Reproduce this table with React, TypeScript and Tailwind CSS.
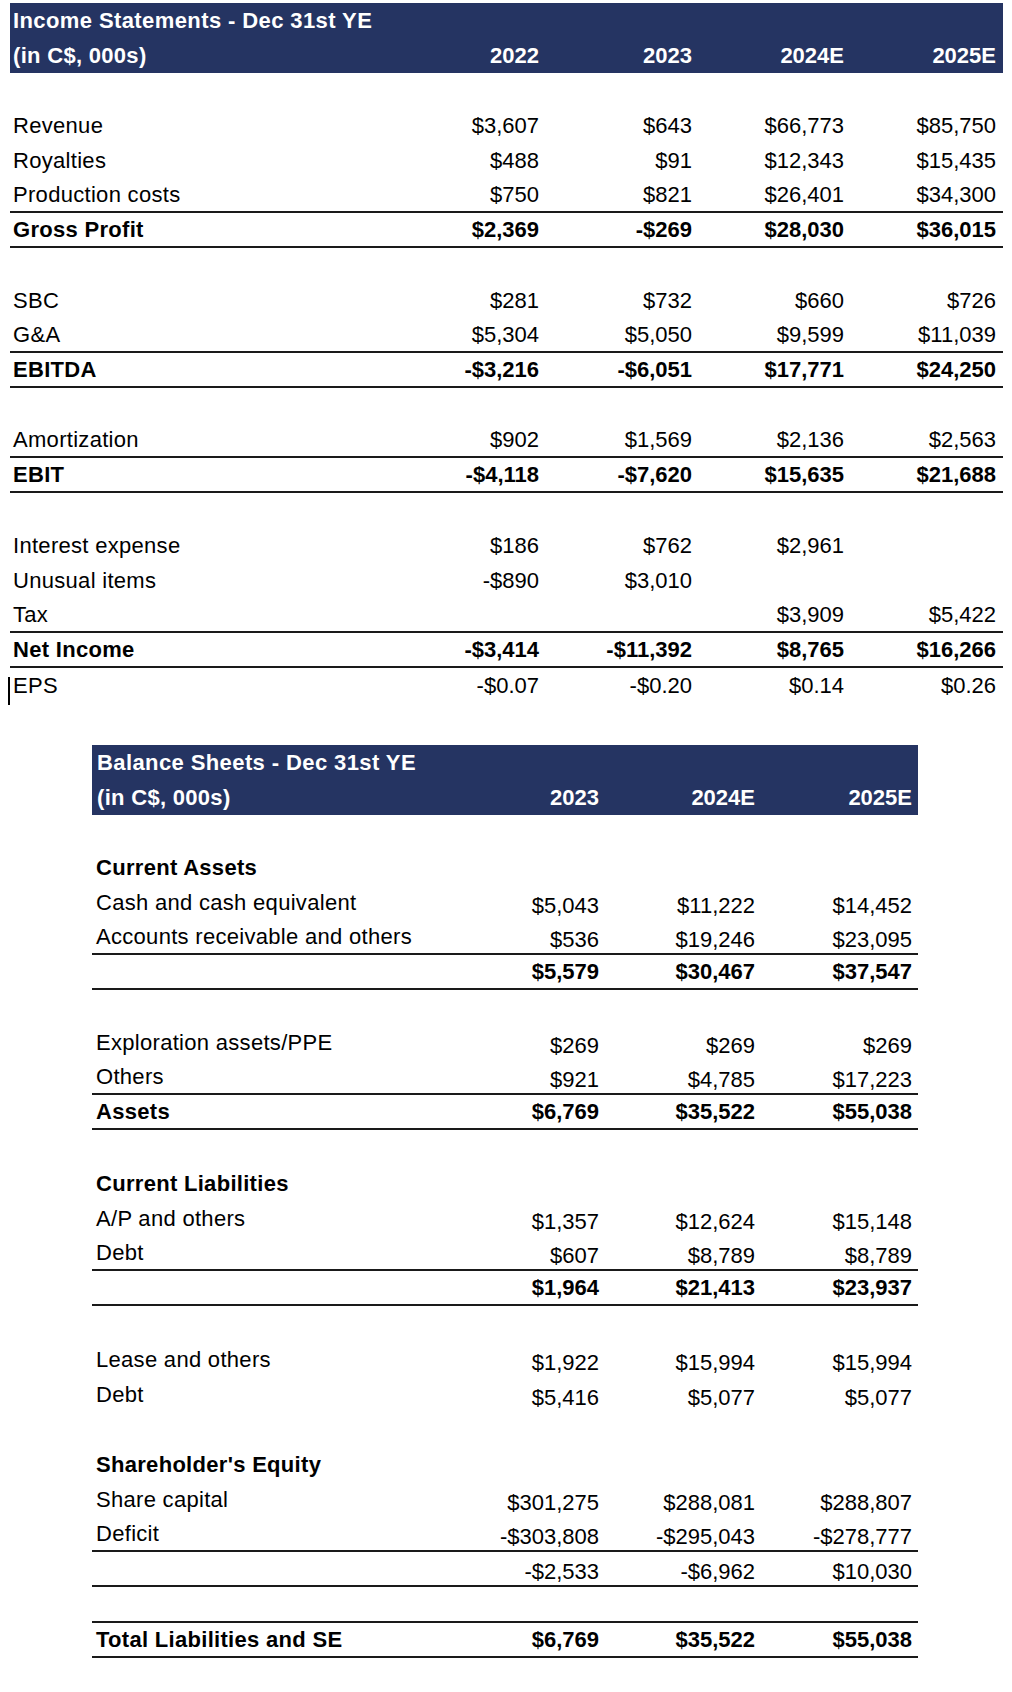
import React from "react";

type Row = {
  label?: string;
  vals?: (string | null)[];
  bold?: boolean;
  line?: boolean;
  cursor?: boolean;
  tall?: boolean;
};

const income: Row[] = [
  {},
  { label: "Revenue", vals: ["$3,607", "$643", "$66,773", "$85,750"] },
  { label: "Royalties", vals: ["$488", "$91", "$12,343", "$15,435"] },
  { label: "Production costs", vals: ["$750", "$821", "$26,401", "$34,300"], line: true },
  { label: "Gross Profit", vals: ["$2,369", "-$269", "$28,030", "$36,015"], bold: true, line: true },
  {},
  { label: "SBC", vals: ["$281", "$732", "$660", "$726"] },
  { label: "G&A", vals: ["$5,304", "$5,050", "$9,599", "$11,039"], line: true },
  { label: "EBITDA", vals: ["-$3,216", "-$6,051", "$17,771", "$24,250"], bold: true, line: true },
  {},
  { label: "Amortization", vals: ["$902", "$1,569", "$2,136", "$2,563"], line: true },
  { label: "EBIT", vals: ["-$4,118", "-$7,620", "$15,635", "$21,688"], bold: true, line: true },
  {},
  { label: "Interest expense", vals: ["$186", "$762", "$2,961", null] },
  { label: "Unusual items", vals: ["-$890", "$3,010", null, null] },
  { label: "Tax", vals: [null, null, "$3,909", "$5,422"], line: true },
  { label: "Net Income", vals: ["-$3,414", "-$11,392", "$8,765", "$16,266"], bold: true, line: true },
  { label: "EPS", vals: ["-$0.07", "-$0.20", "$0.14", "$0.26"], cursor: true },
];

const balance: Row[] = [
  {},
  { label: "Current Assets", bold: true },
  { label: "Cash and cash equivalent", vals: ["$5,043", "$11,222", "$14,452"] },
  { label: "Accounts receivable and others", vals: ["$536", "$19,246", "$23,095"], line: true },
  { vals: ["$5,579", "$30,467", "$37,547"], bold: true, line: true },
  {},
  { label: "Exploration assets/PPE", vals: ["$269", "$269", "$269"] },
  { label: "Others", vals: ["$921", "$4,785", "$17,223"], line: true },
  { label: "Assets", vals: ["$6,769", "$35,522", "$55,038"], bold: true, line: true },
  { tall: true },
  { label: "Current Liabilities", bold: true },
  { label: "A/P and others", vals: ["$1,357", "$12,624", "$15,148"] },
  { label: "Debt", vals: ["$607", "$8,789", "$8,789"], line: true },
  { vals: ["$1,964", "$21,413", "$23,937"], bold: true, line: true },
  { tall: true },
  { label: "Lease and others", vals: ["$1,922", "$15,994", "$15,994"] },
  { label: "Debt", vals: ["$5,416", "$5,077", "$5,077"] },
  {},
  { label: "Shareholder's Equity", bold: true },
  { label: "Share capital", vals: ["$301,275", "$288,081", "$288,807"] },
  { label: "Deficit", vals: ["-$303,808", "-$295,043", "-$278,777"], line: true },
  { vals: ["-$2,533", "-$6,962", "$10,030"], line: true },
  { line: true, tall: true },
  { label: "Total Liabilities and SE", vals: ["$6,769", "$35,522", "$55,038"], bold: true, line: true },
];

function IncomeTable() {
  const grid = "grid grid-cols-[377px_152px_153px_152px_152px] pr-[7px]";
  return (
    <div className="ml-[10px] mt-[3px] w-[993px]">
      <div className="bg-[#253462] text-white font-bold">
        <div className={`${grid} h-[35px] items-center`}>
          <div className="pl-[3px] col-span-5 whitespace-nowrap tracking-[0.4px]">Income Statements - Dec 31st YE</div>
        </div>
        <div className={`${grid} h-[35px] items-center`}>
          <div className="pl-[3px] tracking-[0.3px]">(in C$, 000s)</div>
          <div className="text-right">2022</div>
          <div className="text-right">2023</div>
          <div className="text-right">2024E</div>
          <div className="text-right">2025E</div>
        </div>
      </div>
      {income.map((r, i) => (
        <div
          key={i}
          className={`${grid} relative h-[35px] items-center ${r.line ? "border-b-2 border-[#1a1a1a]" : ""} ${r.bold ? "font-bold" : ""}`}
        >
          {r.cursor && <div className="absolute left-[-2px] top-[9px] h-[28px] w-[2px] bg-black" />}
          <div className="pl-[3px] whitespace-nowrap tracking-[0.3px]">{r.label ?? ""}</div>
          {[0, 1, 2, 3].map((j) => (
            <div key={j} className="text-right whitespace-nowrap">
              {r.vals?.[j] ?? ""}
            </div>
          ))}
        </div>
      ))}
    </div>
  );
}

function BalanceTable() {
  const grid = "grid grid-cols-[355px_152px_156px_157px] pr-[6px]";
  return (
    <div className="ml-[92px] mt-[42px] w-[826px]">
      <div className="bg-[#253462] text-white font-bold">
        <div className={`${grid} h-[35px] items-center`}>
          <div className="pl-[5px] col-span-4 whitespace-nowrap tracking-[0.4px]">Balance Sheets - Dec 31st YE</div>
        </div>
        <div className={`${grid} h-[35px] items-center`}>
          <div className="pl-[5px] tracking-[0.3px]">(in C$, 000s)</div>
          <div className="text-right">2023</div>
          <div className="text-right">2024E</div>
          <div className="text-right">2025E</div>
        </div>
      </div>
      {balance.map((r, i) => (
        <div
          key={i}
          className={`${grid} ${r.tall ? "h-[36px]" : "h-[35px]"} items-center ${r.line ? "border-b-2 border-[#1a1a1a]" : ""} ${r.bold ? "font-bold" : ""}`}
        >
          <div className="pl-[4px] whitespace-nowrap tracking-[0.3px]">{r.label ?? ""}</div>
          {[0, 1, 2].map((j) => (
            <div key={j} className={`text-right whitespace-nowrap ${r.bold ? "" : "pt-[6px]"}`}>
              {r.vals?.[j] ?? ""}
            </div>
          ))}
        </div>
      ))}
    </div>
  );
}

export default function App() {
  return (
    <div className="w-[1012px] h-[1692px] bg-white text-black text-[22px] leading-none font-['Liberation_Sans',Arial,sans-serif] flex flex-col overflow-hidden">
      <IncomeTable />
      <BalanceTable />
    </div>
  );
}
